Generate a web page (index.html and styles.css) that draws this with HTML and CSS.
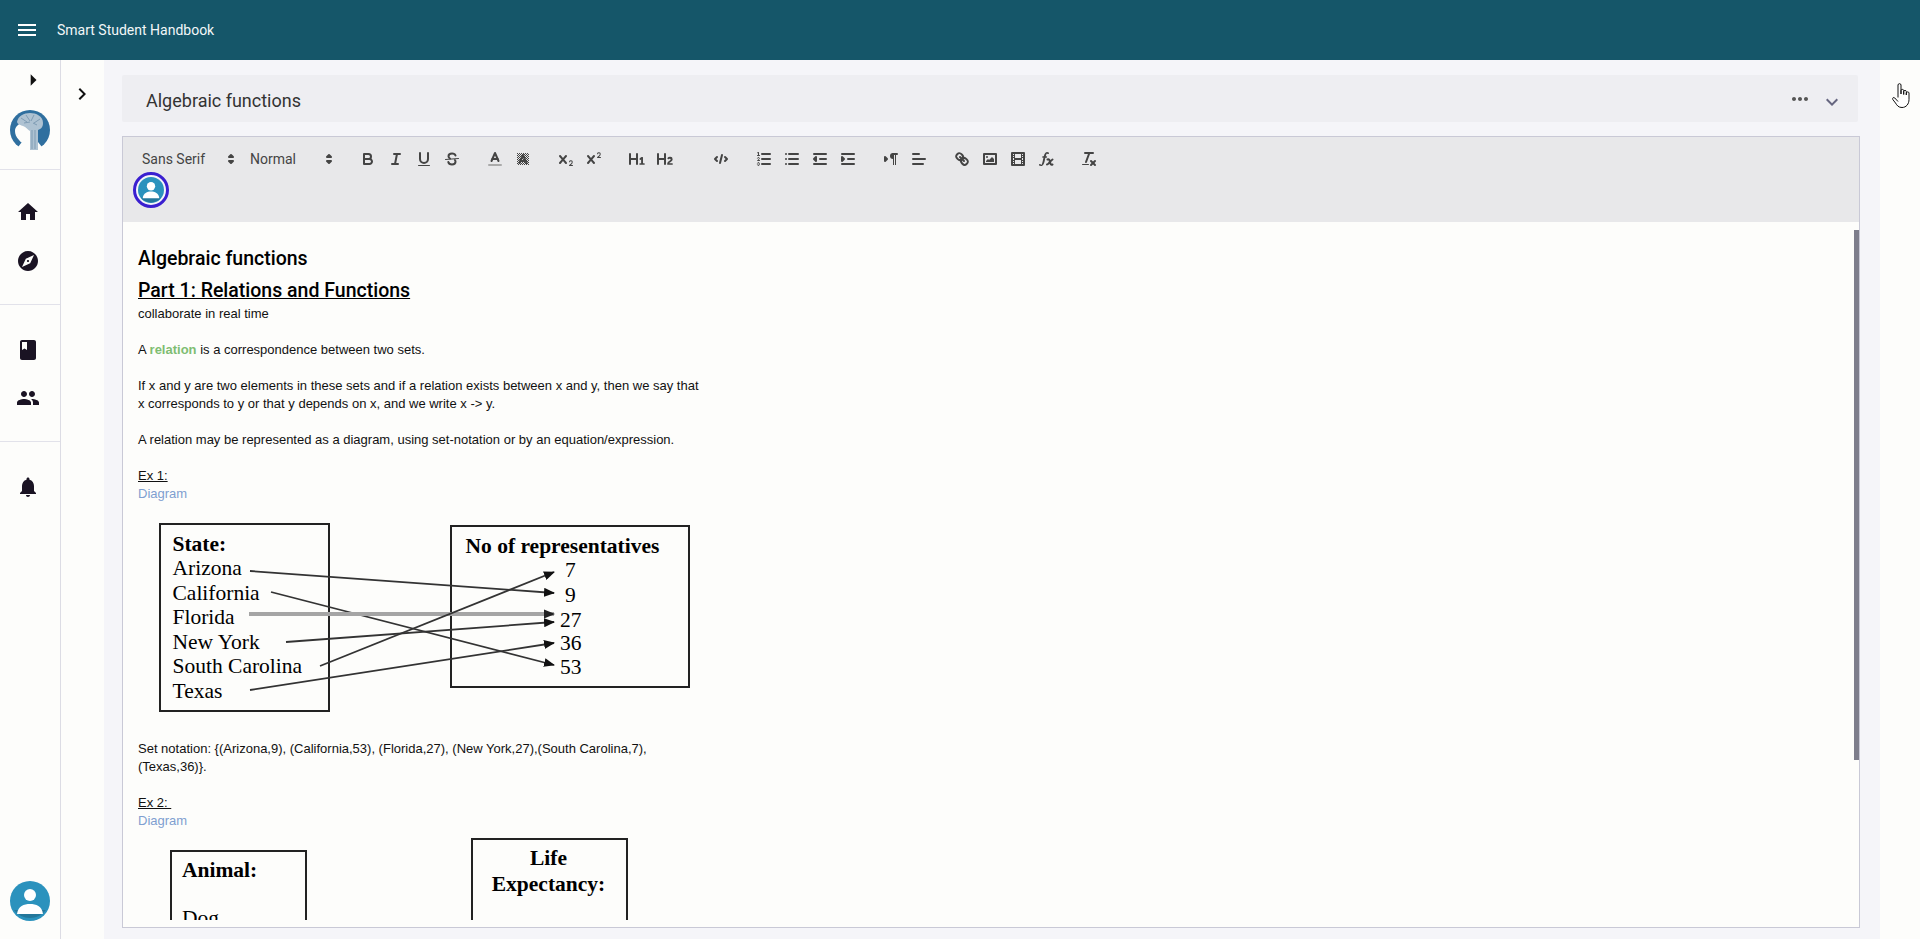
FILE: index.html
```html
<!DOCTYPE html>
<html lang="en">
<head>
<meta charset="utf-8">
<title>Smart Student Handbook</title>
<link rel="stylesheet" href="styles.css">
</head>
<body>
<svg class="defs" width="0" height="0" aria-hidden="true">
  <defs>
    <pattern id="hatch" width="2" height="2" patternUnits="userSpaceOnUse"><rect width="1" height="1" fill="#444"/><rect x="1" y="1" width="1" height="1" fill="#444"/></pattern>
    <marker id="tip" markerWidth="11" markerHeight="9" refX="10" refY="4.500" orient="auto" markerUnits="userSpaceOnUse"><path d="M0 0L11 4.500L0 9z" fill="#111"/></marker>
    <marker id="tipb" markerWidth="11" markerHeight="11" refX="10" refY="5.500" orient="auto" markerUnits="userSpaceOnUse"><path d="M0 1L11 5.500L0 10z" fill="#222"/></marker>
  </defs>
</svg>
<header class="appbar">
  <svg class="menu-icon" viewBox="0 0 24 24"><path d="M3 18h18v-2H3v2zm0-5h18v-2H3v2zm0-7v2h18V6H3z"/></svg>
  <span class="app-title">Smart Student Handbook</span>
</header>
<div class="shell">
  <nav class="rail">
    <div class="rail-top">
      <svg class="rail-toggle" viewBox="0 0 24 24"><path d="M10 17l5-5-5-5v10z"/></svg>
      <svg class="logo" viewBox="0 0 40 40">
        <circle cx="20" cy="20" r="20" fill="#2f6f9f"/>
        <path d="M20 22L4 42h32z" fill="#fdfdfb"/>
        <path d="M5 21c0-4 3-7 7-8h9v9c-2 3-2 7-2 12-4 1-8-1-10-4-3-3-4-6-4-9z" fill="#fdfdfb"/>
        <path d="M7 12C8 6 14 3 20 3s13 3 13 10c0 4-2 6-5 7v20h-8V21c-2-1-4-4-7-5-2-1-5-1-6-4z" fill="#aec2d2"/>
        <path d="M11 8l6 4M16 5l4 6M24 5l-3 6M30 9l-6 4M14 13l6-1M27 15l-4-2M22 20v19M25 20v19" stroke="#7f9cb4" stroke-width="1" fill="none"/>
      </svg>
    </div>
    <div class="rail-group rail-group-a">
      <svg class="nav-icon" viewBox="0 0 24 24"><path d="M10 20v-6h4v6h5v-8h3L12 3 2 12h3v8z"/></svg>
      <svg class="nav-icon" viewBox="0 0 24 24"><path d="M12 10.9c-.61 0-1.1.49-1.1 1.1s.49 1.1 1.1 1.1c.61 0 1.1-.49 1.1-1.1s-.49-1.1-1.1-1.1zM12 2C6.48 2 2 6.48 2 12s4.48 10 10 10 10-4.48 10-10S17.52 2 12 2zm2.19 12.19L6 18l3.81-8.19L18 6l-3.81 8.19z"/></svg>
    </div>
    <div class="rail-group rail-group-b">
      <svg class="nav-icon" viewBox="0 0 24 24"><path d="M18 2H6c-1.1 0-2 .9-2 2v16c0 1.1.9 2 2 2h12c1.1 0 2-.9 2-2V4c0-1.1-.9-2-2-2zM6 4h5v8l-2.5-1.5L6 12V4z"/></svg>
      <svg class="nav-icon" viewBox="0 0 24 24"><path d="M16 11c1.66 0 2.99-1.34 2.99-3S17.66 5 16 5c-1.66 0-3 1.34-3 3s1.34 3 3 3zm-8 0c1.66 0 2.99-1.34 2.99-3S9.66 5 8 5C6.34 5 5 6.34 5 8s1.34 3 3 3zm0 2c-2.33 0-7 1.17-7 3.5V19h14v-2.5c0-2.33-4.67-3.5-7-3.5zm8 0c-.29 0-.62.02-.97.05 1.16.84 1.97 1.97 1.97 3.45V19h6v-2.5c0-2.33-4.67-3.5-7-3.5z"/></svg>
    </div>
    <div class="rail-group rail-group-c">
      <svg class="nav-icon" viewBox="0 0 24 24"><path d="M12 22c1.1 0 2-.9 2-2h-4c0 1.1.89 2 2 2zm6-6v-5c0-3.07-1.64-5.64-4.5-6.32V4c0-.83-.67-1.5-1.5-1.5s-1.5.67-1.5 1.5v.68C7.63 5.36 6 7.92 6 11v5l-2 2v1h16v-1l-2-2z"/></svg>
    </div>
    <svg class="rail-avatar" viewBox="0 0 40 40">
      <circle cx="20" cy="20" r="20" fill="#2b92bd"/>
      <path d="M4 29a20 20 0 0 0 32 0z" fill="#24779b"/>
      <circle cx="20" cy="14" r="6" fill="#fff"/>
      <path d="M7 33c1-8 7-10 13-10s12 2 13 10z" fill="#fff"/>
    </svg>
  </nav>
  <aside class="side-strip">
    <svg class="strip-chevron" viewBox="0 0 24 24"><path d="M10 6L8.59 7.41 13.17 12l-4.58 4.59L10 18l6-6z"/></svg>
  </aside>
  <main class="workspace">
    <section class="panel-head">
      <h2 class="panel-title">Algebraic functions</h2>
      <svg class="panel-more" viewBox="0 0 24 24"><path d="M6 10c-1.1 0-2 .9-2 2s.9 2 2 2 2-.9 2-2-.9-2-2-2zm12 0c-1.1 0-2 .9-2 2s.9 2 2 2 2-.9 2-2-.9-2-2-2zm-6 0c-1.1 0-2 .9-2 2s.9 2 2 2 2-.9 2-2-.9-2-2-2z"/></svg>
      <svg class="panel-expand" viewBox="0 0 24 24"><path d="M16.59 8.59L12 13.17 7.41 8.59 6 10l6 6 6-6z"/></svg>
    </section>
    <section class="editor">
      <div class="toolbar">
        <div class="tool-row">
          <div class="picker picker-font"><span>Sans Serif</span><svg class="updown" viewBox="0 0 18 18"><polygon points="7 11 9 13 11 11 7 11"/><polygon points="7 7 9 5 11 7 7 7"/></svg></div>
          <div class="picker picker-size"><span>Normal</span><svg class="updown" viewBox="0 0 18 18"><polygon points="7 11 9 13 11 11 7 11"/><polygon points="7 7 9 5 11 7 7 7"/></svg></div>
          <div class="tool-group tool-group-first">
            <svg class="tool" viewBox="0 0 18 18"><path class="st" d="M5,4H9.5A2.5,2.5,0,0,1,12,6.5v0A2.5,2.5,0,0,1,9.5,9H5A0,0,0,0,1,5,9V4A0,0,0,0,1,5,4Z"/><path class="st" d="M5,9h5.5A2.5,2.5,0,0,1,13,11.5v0A2.5,2.5,0,0,1,10.5,14H5a0,0,0,0,1,0,0V9A0,0,0,0,1,5,9Z"/></svg>
            <svg class="tool" viewBox="0 0 18 18"><line class="st" x1="7" x2="13" y1="4" y2="4"/><line class="st" x1="5" x2="11" y1="14" y2="14"/><line class="st" x1="8" x2="10" y1="14" y2="4"/></svg>
            <svg class="tool" viewBox="0 0 18 18"><path class="st" d="M5,3V9a4.012,4.012,0,0,0,4,4H9a4.012,4.012,0,0,0,4-4V3"/><rect class="fl" height="1" rx="0.5" ry="0.5" width="12" x="3" y="15"/></svg>
            <svg class="tool" viewBox="0 0 18 18"><line class="st thin" x1="15.5" x2="2.5" y1="8.5" y2="9.5"/><path class="st" d="M12.5 5.5C12 4 10.5 3.5 9 3.5c-2 0-3.5 1-3.5 2.7 0 1 .6 1.8 1.5 2.3M5.3 12c.4 1.7 2 2.500 3.700 2.500 2 0 3.500-1 3.500-2.700 0-.7-.2-1.300-.6-1.800"/></svg>
          </div>
          <div class="tool-group">
            <svg class="tool" viewBox="0 0 18 18"><line class="st faint" x1="3" x2="15" y1="15" y2="15"/><polyline class="st" points="5.5 11 9 3 12.5 11"/><line class="st" x1="11.63" x2="6.38" y1="9" y2="9"/></svg>
            <svg class="tool" viewBox="0 0 18 18"><rect x="3" y="3" width="12" height="12" fill="url(#hatch)"/><polyline class="st" points="5.5 13 9 5 12.500 13"/><line class="st" x1="11.63" x2="6.38" y1="11" y2="11"/></svg>
          </div>
          <div class="tool-group">
            <svg class="tool" viewBox="0 0 18 18"><path class="fl" d="M15.5,15H13.861a3.858,3.858,0,0,0,1.914-2.975,1.8,1.8,0,0,0-1.6-1.751A1.921,1.921,0,0,0,12.021,11.7a0.50013,0.50013,0,1,0,.957.291h0a0.914,0.914,0,0,1,1.053-.725,0.81,0.81,0,0,1,.744.762c0,1.076-1.16971,1.86982-1.93971,2.43082A1.45639,1.45639,0,0,0,12,15.5a0.5,0.5,0,0,0,.5.5h3A0.5,0.5,0,0,0,15.5,15Z"/><path class="fl" d="M9.65,5.241a1,1,0,0,0-1.409.108L6,7.964,3.759,5.349A1,1,0,0,0,2.192,6.59178Q2.21,6.6,2.241,6.651L4.684,9.5,2.241,12.35A1,1,0,0,0,3.71,13.70722q0.02-.02.049-0.049L6,11.036,8.241,13.65a1,1,0,1,0,1.567-1.24277Q9.79,12.4,9.759,12.35L7.316,9.5,9.759,6.651A1,1,0,0,0,9.65,5.241Z"/></svg>
            <svg class="tool" viewBox="0 0 18 18"><path class="fl" d="M15.5,7H13.861a4.015,4.015,0,0,0,1.914-2.975,1.8,1.8,0,0,0-1.6-1.751A1.922,1.922,0,0,0,12.021,3.7a0.5,0.5,0,1,0,.957.291,0.917,0.917,0,0,1,1.053-.725,0.81,0.81,0,0,1,.744.762c0,1.077-1.164,1.925-1.934,2.486A1.423,1.423,0,0,0,12,7.5a0.5,0.5,0,0,0,.5.5h3A0.5,0.5,0,0,0,15.5,7Z"/><path class="fl" d="M9.651,5.241a1,1,0,0,0-1.41.108L6,7.964,3.759,5.349a1,1,0,1,0-1.519,1.3L4.683,9.5,2.241,12.35a1,1,0,1,0,1.519,1.3L6,11.036,8.241,13.65a1,1,0,0,0,1.519-1.3L7.317,9.5,9.759,6.651A1,1,0,0,0,9.651,5.241Z"/></svg>
          </div>
          <div class="tool-group">
            <svg class="tool" viewBox="0 0 18 18"><path class="fl" d="M10,4V14a1,1,0,0,1-2,0V10H3v4a1,1,0,0,1-2,0V4A1,1,0,0,1,3,4V8H8V4a1,1,0,0,1,2,0Zm6.06787,9.209H14.98975V7.59863a.54085.54085,0,0,0-.605-.60547h-.62744a1.01119,1.01119,0,0,0-.748.29688L11.645,8.56641a.5435.5435,0,0,0-.022.8584l.28613.30762a.53861.53861,0,0,0,.84717.0332l.09912-.08789a1.2137,1.2137,0,0,0,.2417-.35254h.02246s-.01123.30859-.01123.60547V13.209H12.041a.54085.54085,0,0,0-.605.60547v.43945a.54085.54085,0,0,0,.605.60547h4.02686a.54085.54085,0,0,0,.605-.60547v-.43945A.54085.54085,0,0,0,16.06787,13.209Z"/></svg>
            <svg class="tool" viewBox="0 0 18 18"><path class="fl" d="M16.73975,13.81445v.43945a.54085.54085,0,0,1-.605.60547H11.855a.58392.58392,0,0,1-.64893-.60547V14.0127c0-2.90527,3.39941-3.42187,3.39941-4.55469a.77675.77675,0,0,0-.84717-.78125,1.17684,1.17684,0,0,0-.83594.38477c-.2749.26367-.561.374-.85791.13184l-.4292-.34082c-.30811-.24219-.38525-.51758-.1543-.81445a2.97155,2.97155,0,0,1,2.45361-1.17676,2.45393,2.45393,0,0,1,2.68408,2.40918c0,2.45312-3.1792,2.92676-3.27832,3.93848h2.79443A.54085.54085,0,0,1,16.73975,13.81445ZM9,3A.99974.99974,0,0,0,8,4V8H3V4A1,1,0,0,0,1,4V14a1,1,0,0,0,2,0V10H8v4a1,1,0,0,0,2,0V4A.99974.99974,0,0,0,9,3Z"/></svg>
          </div>
          <div class="tool-group tool-group-code">
            <svg class="tool" viewBox="0 0 18 18"><polyline class="st" points="5 7 3 9 5 11"/><polyline class="st" points="13 7 15 9 13 11"/><line class="st" x1="10" x2="8" y1="5" y2="13"/></svg>
          </div>
          <div class="tool-group">
            <svg class="tool" viewBox="0 0 18 18"><line class="st" x1="7" x2="15" y1="4" y2="4"/><line class="st" x1="7" x2="15" y1="9" y2="9"/><line class="st" x1="7" x2="15" y1="14" y2="14"/><line class="st thin" x1="2.5" x2="4.5" y1="5.5" y2="5.5"/><path class="fl" d="M3.5,6A0.5,0.5,0,0,1,3,5.5V3.085l-0.276.138A0.5,0.5,0,0,1,2.053,3c-0.124-.247-0.023-0.324.224-0.447l1-.5A0.5,0.5,0,0,1,4,2.5v3A0.5,0.5,0,0,1,3.5,6Z"/><path class="st thin" d="M4.5,10.5h-2c0-.234,1.85-1.076,1.85-2.234A0.959,0.959,0,0,0,2.5,8.156"/><path class="st thin" d="M2.5,14.846a0.959,0.959,0,0,0,1.85-.109A0.7,0.7,0,0,0,3.75,14a0.688,0.688,0,0,0,.6-0.736,0.959,0.959,0,0,0-1.85-.109"/></svg>
            <svg class="tool" viewBox="0 0 18 18"><line class="st" x1="6" x2="15" y1="4" y2="4"/><line class="st" x1="6" x2="15" y1="9" y2="9"/><line class="st" x1="6" x2="15" y1="14" y2="14"/><line class="st" x1="3" x2="3" y1="4" y2="4"/><line class="st" x1="3" x2="3" y1="9" y2="9"/><line class="st" x1="3" x2="3" y1="14" y2="14"/></svg>
            <svg class="tool" viewBox="0 0 18 18"><line class="st" x1="3" x2="15" y1="14" y2="14"/><line class="st" x1="3" x2="15" y1="4" y2="4"/><line class="st" x1="9" x2="15" y1="9" y2="9"/><polyline class="st fl" points="5 7 5 11 3 9 5 7"/></svg>
            <svg class="tool" viewBox="0 0 18 18"><line class="st" x1="3" x2="15" y1="14" y2="14"/><line class="st" x1="3" x2="15" y1="4" y2="4"/><line class="st" x1="9" x2="15" y1="9" y2="9"/><polyline class="st fl" points="3 7 3 11 5 9 3 7"/></svg>
          </div>
          <div class="tool-group">
            <svg class="tool" viewBox="0 0 18 18"><polygon class="st fl" points="3 11 5 9 3 7 3 11"/><line class="st" x1="15" x2="11" y1="4" y2="4"/><path class="fl" d="M11,3a3,3,0,0,0,0,6h1V3H11Z"/><rect class="fl" height="11" width="1" x="11" y="4"/><rect class="fl" height="11" width="1" x="13" y="4"/></svg>
            <svg class="tool" viewBox="0 0 18 18"><line class="st" x1="3" x2="15" y1="9" y2="9"/><line class="st" x1="3" x2="13" y1="14" y2="14"/><line class="st" x1="3" x2="9" y1="4" y2="4"/></svg>
          </div>
          <div class="tool-group">
            <svg class="tool" viewBox="0 0 18 18"><line class="st" x1="7" x2="11" y1="7" y2="11"/><path class="st" d="M8.9,4.577a3.476,3.476,0,0,1,.36,4.679A3.476,3.476,0,0,1,4.577,8.9C3.185,7.5,2.035,6.4,4.217,4.217S7.5,3.185,8.9,4.577Z"/><path class="st" d="M13.423,9.1a3.476,3.476,0,0,0-4.679-.36,3.476,3.476,0,0,0,.36,4.679c1.392,1.392,2.5,2.542,4.679.36S14.815,10.5,13.423,9.1Z"/></svg>
            <svg class="tool" viewBox="0 0 18 18"><rect class="st" height="10" width="12" x="3" y="4"/><circle class="fl" cx="6" cy="7" r="1"/><polyline class="fl" points="5 12 5 11 7 9 8 10 11 7 13 9 13 12 5 12"/></svg>
            <svg class="tool" viewBox="0 0 18 18"><rect class="st" height="12" width="12" x="3" y="3"/><rect class="fl" height="12" width="1" x="5" y="3"/><rect class="fl" height="12" width="1" x="12" y="3"/><rect class="fl" height="2" width="8" x="5" y="8"/><rect class="fl" height="1" width="3" x="3" y="5"/><rect class="fl" height="1" width="3" x="3" y="7"/><rect class="fl" height="1" width="3" x="3" y="10"/><rect class="fl" height="1" width="3" x="3" y="12"/><rect class="fl" height="1" width="3" x="12" y="5"/><rect class="fl" height="1" width="3" x="12" y="7"/><rect class="fl" height="1" width="3" x="12" y="10"/><rect class="fl" height="1" width="3" x="12" y="12"/></svg>
            <svg class="tool" viewBox="0 0 18 18"><path class="fl" d="M11.759,2.482a2.561,2.561,0,0,0-3.53.607A7.656,7.656,0,0,0,6.8,6.2C6.109,9.188,5.275,14.677,4.15,14.927a1.545,1.545,0,0,0-1.3-.933A0.922,0.922,0,0,0,2,15.036S1.954,16,4.119,16s3.091-2.691,3.7-5.553c0.177-.826.36-1.726,0.554-2.6L8.775,6.2c0.381-1.421.807-2.521,1.306-2.676a1.014,1.014,0,0,0,1.02.56A0.966,0.966,0,0,0,11.759,2.482Z"/><rect class="fl" height="1.6" rx="0.8" ry="0.8" width="5" x="5.15" y="6.2"/><path class="st" d="M10.500 9.500c1.500-.8 2 .3 2.500 2.500s1 3.300 2.500 2.500M10 14.500c1.500.3 3-3.500 5.500-5"/></svg>
          </div>
          <div class="tool-group">
            <svg class="tool" viewBox="0 0 18 18"><line class="st" x1="5" x2="13" y1="3" y2="3"/><line class="st" x1="6" x2="9.35" y1="12" y2="3"/><line class="st" x1="11" x2="15" y1="11" y2="15"/><line class="st" x1="15" x2="11" y1="11" y2="15"/><rect class="fl" height="1" rx="0.5" ry="0.5" width="7" x="2" y="14"/></svg>
          </div>
        </div>
        <div class="presence">
          <svg class="presence-avatar" viewBox="0 0 28 28">
            <circle cx="14" cy="14" r="14" fill="#2b92bd"/>
            <path d="M3 22a14 14 0 0 0 22 0z" fill="#24779b"/>
            <circle cx="14" cy="10" r="4.500" fill="#fff"/>
            <path d="M5 23c.7-6 5-7.500 9-7.500s8.300 1.500 9 7.500z" fill="#fff"/>
          </svg>
        </div>
      </div>
      <div class="doc">
        <article class="doc-body">
          <h3 class="doc-h1">Algebraic functions</h3>
          <h4 class="doc-h2">Part 1: Relations and Functions</h4>
          <p>collaborate in real time</p>
          <p class="gap">A <strong class="term">relation</strong> is a correspondence between two sets.</p>
          <p class="gap">If x and y are two elements in these sets and if a relation exists between x and y, then we say that<br>x corresponds to y or that y depends on x, and we write x -&gt; y.</p>
          <p class="gap">A relation may be represented as a diagram, using set-notation or by an equation/expression.</p>
          <p class="gap"><u>Ex 1:</u></p>
          <p class="link">Diagram</p>
          <svg class="figure fig-a" viewBox="138 503 560 219">
            <rect class="box" x="160" y="524" width="169" height="187"/>
            <rect class="box" x="451" y="526" width="238" height="161"/>
            <text class="b" x="172.500" y="551">State:</text>
            <text x="172.500" y="575">Arizona</text>
            <text x="172.500" y="599.500">California</text>
            <text x="172.500" y="624">Florida</text>
            <text x="172.500" y="648.500">New York</text>
            <text x="172.500" y="673">South Carolina</text>
            <text x="172.500" y="698">Texas</text>
            <text class="b" x="465.500" y="552.500">No of representatives</text>
            <text x="565" y="577">7</text>
            <text x="565" y="602">9</text>
            <text x="560" y="627">27</text>
            <text x="560" y="650">36</text>
            <text x="560" y="674">53</text>
            <line class="arrow" x1="250" y1="571" x2="554" y2="593"/>
            <line class="arrow" x1="271" y1="592" x2="554" y2="665"/>
            <line class="arrow thick" x1="249" y1="614" x2="554" y2="614"/>
            <line class="arrow" x1="286" y1="642" x2="554" y2="622"/>
            <line class="arrow" x1="320" y1="666" x2="554" y2="572"/>
            <line class="arrow" x1="250" y1="690" x2="554" y2="643"/>
          </svg>
          <p class="gap">Set notation: {(Arizona,9), (California,53), (Florida,27), (New York,27),(South Carolina,7),<br>(Texas,36)}.</p>
          <p class="gap"><u>Ex 2:&nbsp;</u></p>
          <p class="link">Diagram</p>
          <svg class="figure fig-b" viewBox="138 830 560 110">
            <rect class="box" x="171" y="851" width="135" height="120"/>
            <rect class="box" x="472" y="839" width="155" height="130"/>
            <text class="b" x="182" y="877">Animal:</text>
            <text x="182" y="925">Dog</text>
            <text class="b mid" x="548.500" y="865">Life</text>
            <text class="b mid" x="548.500" y="891">Expectancy:</text>
          </svg>
        </article>
        <div class="thumb"></div>
      </div>
    </section>
  </main>
  <aside class="right-gutter"></aside>
</div>
<svg class="hand-cursor" viewBox="0 0 18 25">
  <path d="M6 14.500V2c0-1.800 3-1.800 3 0V11M9 11V7.500c0-1.500 2.700-1.500 2.700 0V11.500M11.700 11.500V8.500c0-1.500 2.600-1.500 2.600 0V12M14.300 12V10c0-1.500 2.700-1.500 2.700 0v6.500c0 4.500-2.800 8-7 8-3.500 0-5-2-6.500-4.500L.8 16.500c-.8-1.500.8-2.700 2-1.500L6 18.500" />
</svg>
</body>
</html>
```
FILE: styles.css
```css
* { box-sizing: border-box; }
html, body { margin: 0; height: 100%; overflow: hidden; }
body { background: #fdfdfb; font-family: "Liberation Sans", Arial, sans-serif; display: flex; flex-direction: column; }
.defs { position: absolute; }

.appbar { height: 60px; flex: none; background: #155669; display: flex; align-items: center; padding-left: 15px; }
.menu-icon { width: 24px; height: 24px; fill: #fff; }
.app-title { margin-left: 18px; color: #f2f7f8; font: 400 14px "Roboto", sans-serif; }

.shell { flex: 1; display: flex; min-height: 0; }

.rail { width: 61px; flex: none; border-right: 1px solid #dcdce4; display: flex; flex-direction: column; }
.rail-top { height: 110px; display: flex; flex-direction: column; align-items: center; border-bottom: 1px solid #e2e2ea; }
.rail-toggle { width: 28px; height: 28px; margin: 6px 0 0 6px; fill: #111; flex: none; }
.logo { width: 40px; height: 40px; margin-top: 16px; flex: none; }
.rail-group { display: flex; flex-direction: column; align-items: center; border-bottom: 1px solid #e2e2ea; padding-right: 4px; }
.rail-group-a { height: 135px; padding-top: 30px; gap: 25px; }
.rail-group-b { height: 137px; padding-top: 33px; gap: 24px; }
.rail-group-c { border-bottom: 0; padding-top: 33px; }
.nav-icon { width: 24px; height: 24px; fill: #1a1323; flex: none; }
.rail-avatar { width: 40px; height: 40px; margin: auto 0 18px 10px; flex: none; }

.side-strip { width: 43px; flex: none; }
.strip-chevron { width: 24px; height: 24px; margin: 22px 0 0 9px; fill: #111; display: block; }

.workspace { width: 1776px; flex: none; background: #f5f5f9; padding: 15px 20px 0 18px; display: flex; flex-direction: column; min-height: 0; }
.panel-head { width: 1736px; height: 47px; flex: none; background: #eeeef2; display: flex; align-items: center; padding-left: 24px; border-radius: 2px; }
.panel-title { margin: 4px 0 0; font: 400 18px "Roboto", sans-serif; color: #333; flex: 1; }
.panel-more { width: 24px; height: 24px; fill: #555; margin-right: 8px; margin-top: 1px; }
.panel-expand { width: 24px; height: 24px; fill: #666680; margin-right: 14px; margin-top: 6px; }

.editor { margin-top: 14px; width: 1738px; height: 792px; flex: none; border: 1px solid #c9c9d6; background: #fdfdfb; display: flex; flex-direction: column; }
.toolbar { height: 85px; flex: none; background: #e8e8ea; padding: 10px 0 0 11px; }
.tool-row { display: flex; height: 24px; align-items: center; }
.picker { display: flex; align-items: center; height: 24px; padding-left: 8px; color: #444; font: 400 14px "Roboto", sans-serif; position: relative; }
.picker-font { width: 108px; }
.picker-size { width: 98px; }
.updown { position: absolute; right: 2px; top: 3px; width: 18px; height: 18px; fill: #444; stroke: #444; stroke-width: 2; stroke-linejoin: round; }
.tool-group { display: flex; margin-left: 15px; }
.tool-group-first { margin-left: 14px; }
.tool-group-code { margin-left: 28px; }
.tool { width: 28px; height: 24px; padding: 3px 5px; flex: none; }
.st { fill: none; stroke: #444; stroke-width: 2; stroke-linecap: round; stroke-linejoin: round; }
.fl { fill: #444; }
.st.fl { fill: #444; }
.thin { stroke-width: 1; }
.faint { stroke: #aaa; }
.presence { margin: 1px 0 0 -1px; width: 36px; height: 36px; border: 3px solid #3a1fd0; border-radius: 50%; background: #f5f5fa; padding: 2px; }
.presence-avatar { display: block; width: 26px; height: 26px; }

.doc { flex: 1; min-height: 0; position: relative; padding-bottom: 7px; }
.doc-body { height: 100%; overflow: hidden; padding: 24px 0 0 15px; color: #111; font-size: 13px; line-height: 18px; }
.doc-h1 { margin: 0; font: 500 19.500px/26px "Roboto", sans-serif; color: #000; }
.doc-h2 { margin: 6px 0 1px; font: 500 19.500px/26px "Roboto", sans-serif; color: #000; text-decoration: underline; }
.doc-body p { margin: 0; }
.doc-body p.gap { margin-top: 18px; }
.term { color: #7fbd72; font-weight: 700; }
.doc-body .link { color: #7f9fd0; }
.figure { display: block; }
.fig-a { width: 560px; height: 219px; }
.fig-b { width: 560px; height: 110px; }
.figure text { font-family: "Liberation Serif", serif; font-size: 21.500px; fill: #000; }
.figure text.b { font-weight: 700; }
.figure text.mid { text-anchor: middle; }
.box { fill: none; stroke: #222; stroke-width: 2; }
.arrow { stroke: #333; stroke-width: 1.800; marker-end: url(#tip); }
.arrow.thick { stroke: #a5a5a5; stroke-width: 4; marker-end: url(#tipb); }
.thumb { position: absolute; top: 8px; right: 0; width: 5px; height: 530px; background: #7e7e8c; }

.right-gutter { flex: 1; }
.hand-cursor { position: absolute; left: 1892px; top: 83px; width: 18px; height: 25px; fill: #fff; stroke: #111; stroke-width: 1; stroke-linejoin: round; }
```
